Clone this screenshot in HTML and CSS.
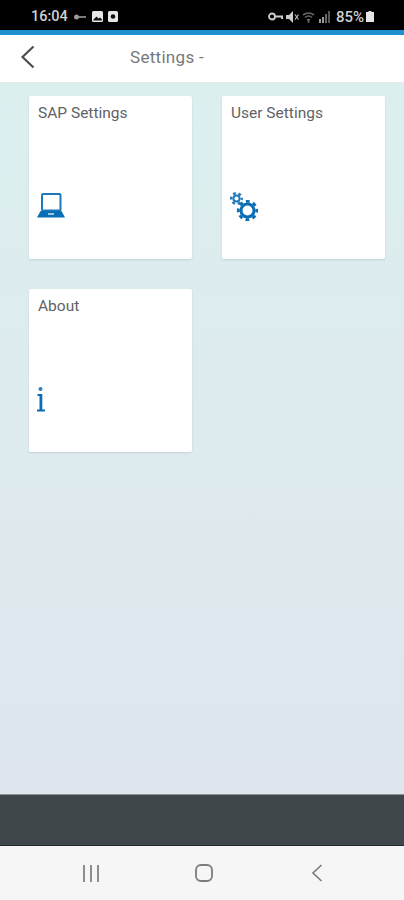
FILE: index.html
```html
<!DOCTYPE html>
<html lang="en">
<head>
<meta charset="utf-8">
<title>Settings</title>
<link rel="stylesheet" href="styles.css">
</head>
<body>
<div class="app">
  <div class="status">
    <div class="status-left">
      <span class="time">16:04</span>
      <svg class="si" width="14" height="10" viewBox="0 0 14 10"><circle cx="3.500" cy="5" r="2.500" fill="#9a9a9a"/><path d="M5 5h8" stroke="#9a9a9a" stroke-width="1.600"/></svg>
      <svg class="si" width="11" height="11" viewBox="0 0 11 11"><rect width="11" height="11" rx="1.500" fill="#e6e6e6"/><path d="M1.500 8.500l3-3 2 2 1.500-1 2 2v1h-8.500z" fill="#111"/></svg>
      <svg class="si" width="10" height="11" viewBox="0 0 10 11"><rect width="10" height="11" rx="1.500" fill="#e6e6e6"/><circle cx="5" cy="5.500" r="2.300" fill="#111"/></svg>
    </div>
    <div class="status-right">
      <svg width="15" height="9" viewBox="0 0 15 9"><circle cx="4" cy="4.500" r="3" fill="none" stroke="#ccc" stroke-width="1.800"/><path d="M7 4.500h7v2.500" fill="none" stroke="#ccc" stroke-width="2"/></svg>
      <svg width="13" height="12" viewBox="0 0 13 12"><path d="M0 4h3l4-4v12l-4-4H0z" fill="#ccc"/><path d="M9 3.500l3.500 5M12.500 3.500L9 8.500" stroke="#bbb" stroke-width="1.200"/></svg>
      <svg width="13" height="12" viewBox="0 0 13 12"><path d="M1 4q5.500-4 11 0M3 6.500q3.500-3 7 0M5 9q1.500-1 3 0" fill="none" stroke="#666" stroke-width="1.600"/><path d="M6.500 9v3" stroke="#666" stroke-width="1.600"/></svg>
      <svg width="12" height="12" viewBox="0 0 12 12"><rect x="1" y="8" width="2" height="4" fill="#999"/><rect x="4" y="6" width="2" height="6" fill="#999"/><rect x="7" y="3" width="2" height="9" fill="#666"/><rect x="10" y="0" width="2" height="12" fill="#555"/></svg>
      <span class="batt-text">85%</span>
      <svg width="8" height="11" viewBox="0 0 8 11"><path d="M2.500 0h3v1H8v10H0V1h2.500z" fill="#e6e6e6"/></svg>
    </div>
  </div>
  <header class="topbar">
    <svg class="back" width="16" height="24" viewBox="0 0 16 24"><path d="M14.500 1.500L3.500 12l11 10.500" fill="none" stroke="#4a4f52" stroke-width="2.200"/></svg>
    <h1 class="title">Settings -</h1>
  </header>
  <main class="content">
    <div class="tile">
      <div class="tile-label">SAP Settings</div>
      <svg class="tile-icon laptop" width="28" height="25" viewBox="0 0 28 25"><rect x="5" y="1" width="18.500" height="16.500" rx="1" fill="none" stroke="#1f78b8" stroke-width="2"/><path d="M3.500 18h21L28 24.500H0z" fill="#0a6eb4"/><rect x="11" y="20" width="6" height="2" fill="#9cc8e6"/></svg>
    </div>
    <div class="tile">
      <div class="tile-label">User Settings</div>
      <svg class="tile-icon gears" width="28" height="29" viewBox="0 0 28 29">
        <circle cx="6.500" cy="6.500" r="3.100" fill="none" stroke="#1f78b8" stroke-width="2"/>
        <circle cx="6.500" cy="6.500" r="5.300" fill="none" stroke="#1f78b8" stroke-width="2.400" stroke-dasharray="2.800 2.750" stroke-dashoffset="1.400"/>
        <circle cx="17.500" cy="18.500" r="6.500" fill="none" stroke="#0a6eb4" stroke-width="3"/>
        <circle cx="17.500" cy="18.500" r="9.200" fill="none" stroke="#0a6eb4" stroke-width="2.800" stroke-dasharray="3.800 3.430" stroke-dashoffset="1.900"/>
      </svg>
    </div>
    <div class="tile">
      <div class="tile-label">About</div>
      <svg class="tile-icon info" width="8" height="25" viewBox="0 0 8 25"><circle cx="3.500" cy="2" r="2" fill="#2a80bf"/><path d="M0.500 7h4.800v15.500H8V24.500H0V22.500h2.500V9H0.500z" fill="#0a6eb4"/></svg>
    </div>
  </main>
  <div class="footer"></div>
  <nav class="navbar">
    <svg width="18" height="17" viewBox="0 0 18 17"><path d="M2 0v17M9 0v17M16 0v17" stroke="#7c7c7c" stroke-width="1.700"/></svg>
    <svg width="18" height="18" viewBox="0 0 18 18"><rect x="1" y="1" width="16" height="16" rx="5" fill="none" stroke="#7c7c7c" stroke-width="1.800"/></svg>
    <svg width="18" height="18" viewBox="0 0 18 18"><path d="M13.500 1L5 9l8.500 8" fill="none" stroke="#7c7c7c" stroke-width="1.700"/></svg>
  </nav>
</div>
</body>
</html>
```
FILE: styles.css
```css
* { box-sizing: border-box; }
html, body { margin: 0; padding: 0; }
body { font-family: Roboto, "Liberation Sans", sans-serif; }
.app { width: 404px; height: 900px; display: flex; flex-direction: column; overflow: hidden; }

.status { height: 35px; flex: none; background: #000; border-bottom: 5px solid #1f8fd0; display: flex; justify-content: space-between; align-items: center; padding: 7px 30px 4px 31px; color: #d0d0d0; }
.status-left, .status-right { display: flex; align-items: center; }
.status-left { gap: 5px; }
.status-right { gap: 3px; }
.time { font-size: 14.500px; font-weight: 500; }
.batt-text { font-size: 15px; font-weight: 500; margin: 0 -1px 0 3px; }

.topbar { height: 48px; flex: none; background: #fff; display: flex; align-items: center; padding: 0 0 4px 19px; border-bottom: 1px solid #e4eaea; }
.back { flex: none; }
.title { margin: 0 0 0 95px; font-size: 17px; font-weight: 400; color: #75797b; letter-spacing: 0.3px; }

.content { flex: 1; background: linear-gradient(180deg, #dcefef 0%, #dfe6ee 100%); display: grid; grid-template-columns: 163px 163px; grid-auto-rows: 163px; gap: 30px; padding: 13px 29px; align-content: start; }
.tile { background: #fff; border-radius: 2px; box-shadow: 0 1px 2px rgba(120,140,150,.25); padding: 7px 9px; display: flex; flex-direction: column; }
.tile-label { font-size: 15.500px; color: #5f6365; line-height: 20px; }
.tile-icon { display: block; }
.laptop { margin: 70px 0 0 -1px; }
.gears { margin: 69px 0 0 -1px; }
.info { margin: 71px 0 0 -1px; }

.footer { height: 52px; flex: none; background: #40474a; border-top: 1px solid #8a9296; border-bottom: 1px solid #1c2a2a; }
.navbar { height: 54px; flex: none; background: #f6f6f6; display: flex; align-items: center; justify-content: space-between; padding: 0 78px 0 82px; }
```
